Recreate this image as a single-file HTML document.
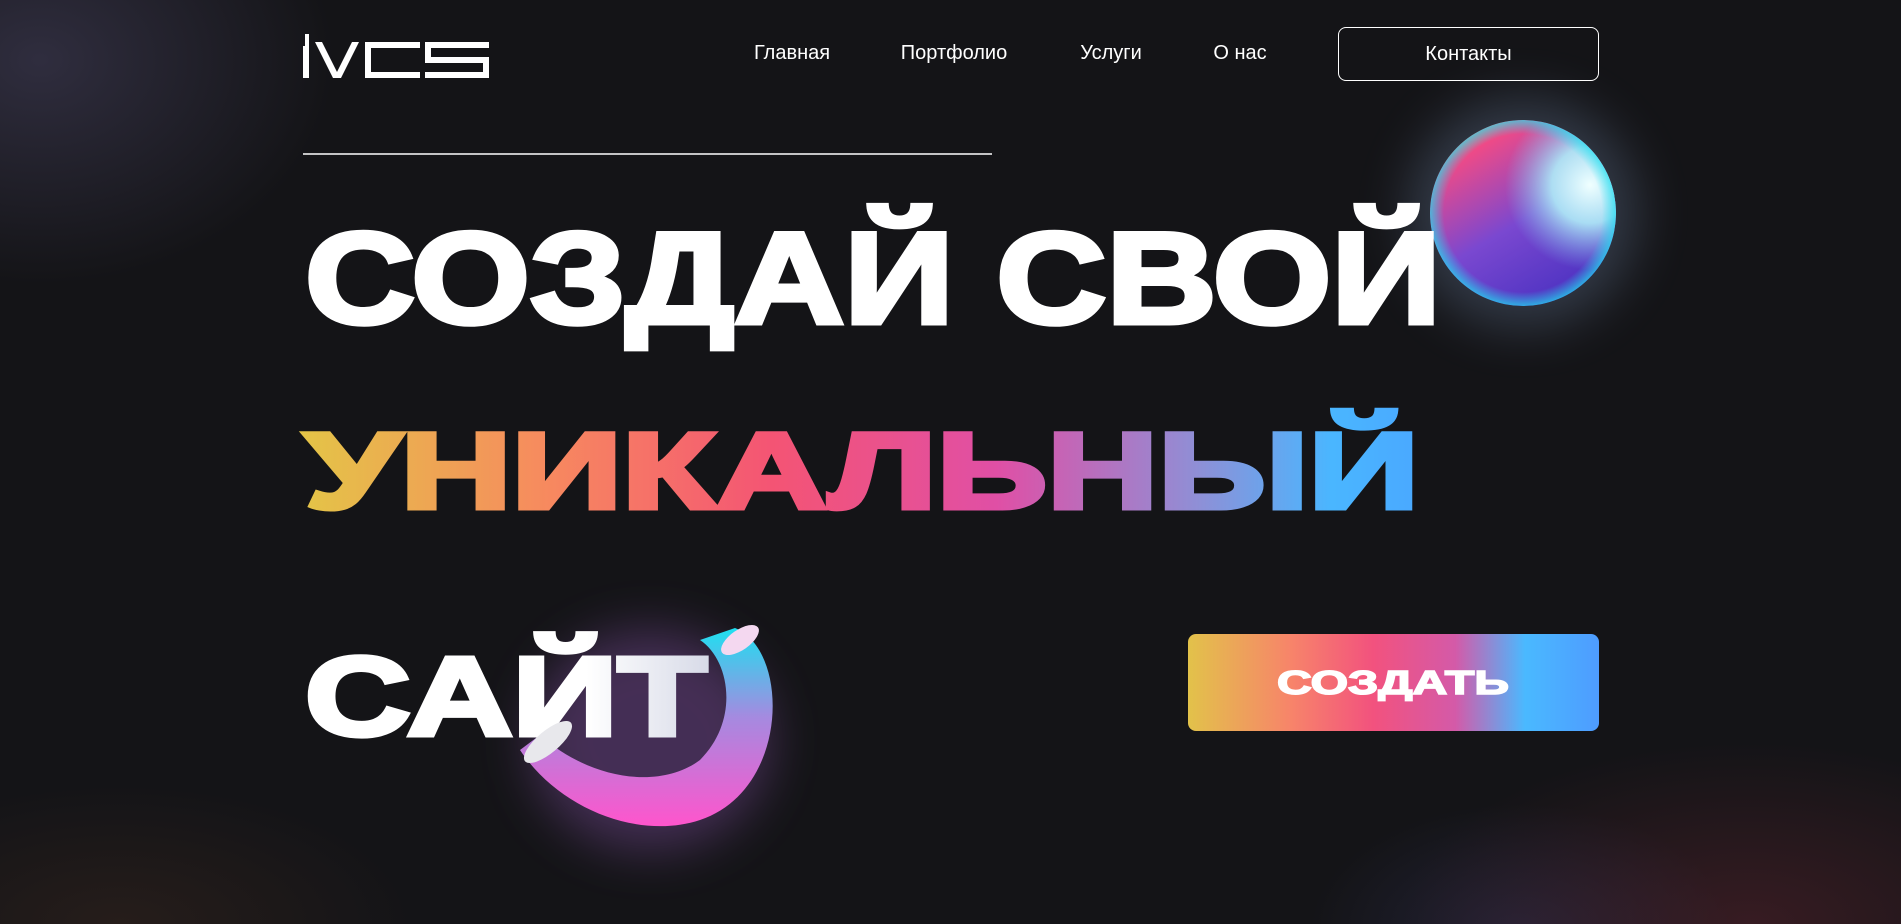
<!DOCTYPE html>
<html><head><meta charset="utf-8"><style>
html,body{margin:0;padding:0;width:1901px;height:924px;overflow:hidden;background:#141417;font-family:"Liberation Sans",sans-serif;}
.bg{position:absolute;inset:0;background:
radial-gradient(ellipse 420px 320px at 40px 60px,rgba(70,66,95,.55),transparent 70%),
radial-gradient(ellipse 500px 260px at 1750px 924px,rgba(90,35,45,.5),transparent 70%),
radial-gradient(ellipse 420px 200px at 120px 924px,rgba(60,40,30,.45),transparent 70%),
radial-gradient(ellipse 300px 180px at 1520px 930px,rgba(60,60,110,.35),transparent 70%);}
.nav a{position:absolute;top:42px;color:#fff;font-size:20px;text-decoration:none;transform:translateX(-50%);white-space:nowrap}
.btn{position:absolute;left:1338px;top:27px;width:261px;height:54px;border:1.5px solid #fff;border-radius:8px;color:#fff;font-size:20px;display:flex;align-items:center;justify-content:center;box-sizing:border-box}
</style></head><body>
<div class="bg"></div>
<svg width="1901" height="924" style="position:absolute;left:0;top:0">
<defs>
<linearGradient id="uni" x1="303" x2="1421" y1="0" y2="0" gradientUnits="userSpaceOnUse">
<stop offset="0" stop-color="#e4c447"/><stop offset=".22" stop-color="#f7895f"/><stop offset=".42" stop-color="#f45474"/><stop offset=".62" stop-color="#e04fa5"/><stop offset=".8" stop-color="#8f8fd6"/><stop offset=".92" stop-color="#4ab6ff"/><stop offset="1" stop-color="#4aa8ff"/></linearGradient>
<linearGradient id="btn" x1="0" x2="1"><stop offset="0" stop-color="#e2c24a"/><stop offset=".25" stop-color="#f7846a"/><stop offset=".45" stop-color="#f2527e"/><stop offset=".65" stop-color="#d45aa8"/><stop offset=".82" stop-color="#4ab9ff"/><stop offset="1" stop-color="#4e9cff"/></linearGradient>
<linearGradient id="sbase" x1="0" y1="0" x2=".6" y2="1"><stop offset="0" stop-color="#ffcf50"/><stop offset=".25" stop-color="#f04a86"/><stop offset=".6" stop-color="#7a48d0"/><stop offset="1" stop-color="#4830c0"/></linearGradient>
<radialGradient id="shl" cx="1590" cy="185" r="85" gradientUnits="userSpaceOnUse"><stop offset="0" stop-color="#f0ffff"/><stop offset=".45" stop-color="#b0eef8" stop-opacity=".9"/><stop offset="1" stop-color="#80c0f0" stop-opacity="0"/></radialGradient>
<radialGradient id="srim" cx=".5" cy=".5" r=".5"><stop offset=".85" stop-color="#20e0f0" stop-opacity="0"/><stop offset="1" stop-color="#20e0f0" stop-opacity=".7"/></radialGradient>
<linearGradient id="tor" x1="0" y1="0" x2="0" y2="1"><stop offset="0" stop-color="#1ee0f0"/><stop offset=".45" stop-color="#a58ae0"/><stop offset="1" stop-color="#ff55cc"/></linearGradient>
<linearGradient id="tfade" x1="0" x2="1"><stop offset="0" stop-color="#fff"/><stop offset=".7" stop-color="#fff"/><stop offset="1" stop-color="#d8dbe8"/></linearGradient>
<filter id="blur" x="-50%" y="-50%" width="200%" height="200%"><feGaussianBlur stdDeviation="25"/></filter>
<clipPath id="sc"><circle cx="1523" cy="213" r="93"/></clipPath>
</defs>
<g fill="#fff">
<path d="M305 34 L309 34 L309 46 L305 46 Z"/>
<rect x="303" y="46" width="6" height="32"/>
<path d="M315 42 L322 42 L337 72 L352 42 L359 42 L341 78 L333 78 Z"/>
<path d="M365 42 H420 V48 H371 V72 H420 V78 H365 Z"/>
<path d="M425 42 H489 V48 H431 V57 H489 V78 H425 V72 H483 V63 H425 Z"/>
</g>
<line x1="303" y1="154" x2="992" y2="154" stroke="#fff" stroke-width="1.5"/>
<circle cx="1523" cy="213" r="115" fill="#6a80a0" opacity=".35" filter="url(#blur)"/>
<g clip-path="url(#sc)">
<rect x="1420" y="110" width="210" height="210" fill="url(#sbase)"/>
<rect x="1420" y="110" width="210" height="210" fill="url(#shl)"/>
<circle cx="1523" cy="213" r="93" fill="url(#srim)"/>
</g>
<ellipse cx="650" cy="740" rx="120" ry="110" fill="#8050a0" opacity=".45" filter="url(#blur)"/>
<text x="305" y="323" font-size="130" font-weight="bold" fill="#fff" stroke="#fff" stroke-width="5" textLength="1136" lengthAdjust="spacingAndGlyphs">СОЗДАЙ СВОЙ</text>
<text x="305" y="508" font-size="108" font-weight="bold" fill="url(#uni)" stroke="url(#uni)" stroke-width="5" textLength="1114" lengthAdjust="spacingAndGlyphs">УНИКАЛЬНЫЙ</text>
<path d="M735 628 C790 650 790 790 700 820 C640 840 560 810 520 750 L540 735 C590 780 660 790 700 760 C740 720 730 660 700 640 Z" fill="url(#tor)"/>
<text x="305" y="735" font-size="112" font-weight="bold" fill="url(#tfade)" stroke="url(#tfade)" stroke-width="5" textLength="402" lengthAdjust="spacingAndGlyphs">САЙТ</text>
<ellipse cx="740" cy="640" rx="22" ry="10" transform="rotate(-35 740 640)" fill="#f4d8f0"/>
<ellipse cx="548" cy="742" rx="30" ry="11" transform="rotate(-40 548 742)" fill="#e8e8ec"/>
<rect x="1188" y="634" width="411" height="97" rx="8" fill="url(#btn)"/>
<text x="1393" y="694" font-size="33" font-weight="bold" fill="#fff" stroke="#fff" stroke-width="1.5" text-anchor="middle" textLength="232" lengthAdjust="spacingAndGlyphs">СОЗДАТЬ</text>
</svg>
<div class="nav">
<a style="left:792px">Главная</a>
<a style="left:954px">Портфолио</a>
<a style="left:1111px">Услуги</a>
<a style="left:1240px">О нас</a>
</div>
<div class="btn">Контакты</div>
</body></html>
